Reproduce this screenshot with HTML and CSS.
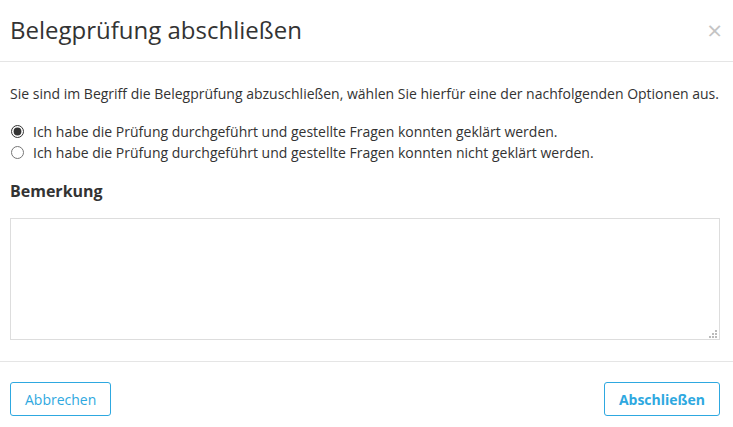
FILE: index.html
```html
<!doctype html>
<html lang="de">
<head>
    <meta charset="UTF-8">
    <title>Belegprüfung abschließen</title>
    <link rel="stylesheet" href="styles.css">
</head>
<body>
    <div class="modal">
        <div class="modal-header">
            <h4 class="modal-title">Belegprüfung abschließen</h4>
            <span class="close">&times;</span>
        </div>
        <div class="modal-body">
            <p class="intro">Sie sind im Begriff die Belegprüfung abzuschließen, wählen Sie hierfür eine der nachfolgenden Optionen aus.</p>
            <label class="radio"><input type="radio" name="result" checked> Ich habe die Prüfung durchgeführt und gestellte Fragen konnten geklärt werden.</label>
            <label class="radio"><input type="radio" name="result"> Ich habe die Prüfung durchgeführt und gestellte Fragen konnten nicht geklärt werden.</label>
            <h5 class="label">Bemerkung</h5>
            <div class="note-wrap">
                <textarea class="note"></textarea>
                <svg class="grip" width="9" height="9" viewBox="0 0 9 9">
                    <rect x="6" y="0" width="2" height="2"/>
                    <rect x="3" y="3" width="2" height="2"/>
                    <rect x="6" y="3" width="2" height="2"/>
                    <rect x="0" y="6" width="2" height="2"/>
                    <rect x="3" y="6" width="2" height="2"/>
                    <rect x="6" y="6" width="2" height="2"/>
                </svg>
            </div>
        </div>
        <div class="modal-footer">
            <button class="btn">Abbrechen</button>
            <button class="btn btn-bold">Abschließen</button>
        </div>
    </div>
</body>
</html>
```
FILE: styles.css
```css
*{
    margin: 0;
    padding: 0;
    box-sizing: border-box;
}
body{
    font-family: "Open Sans", sans-serif;
    font-size: 14px;
    color: #333;
    background: #fff;
}
.modal{
    width: 733px;
}
.modal-header{
    height: 62px;
    padding: 0 11px 2px 10px;
    display: flex;
    align-items: center;
    justify-content: space-between;
    border-bottom: 1px solid #e5e5e5;
}
.modal-title{
    font-size: 24px;
    font-weight: normal;
    color: #333;
}
.close{
    font-size: 26px;
    line-height: 1;
    color: #c4c4c4;
}
.modal-body{
    padding: 21px 13px 21px 10px;
}
.intro{
    line-height: 22px;
    margin-bottom: 16px;
}
.radio{
    display: flex;
    align-items: center;
    line-height: 21px;
}
.radio input{
    width: 13px;
    height: 13px;
    margin: 0 9px 0 1px;
    accent-color: #333;
}
.label{
    font-size: 16px;
    font-weight: bold;
    margin: 17px 0 16px;
    line-height: 22px;
}
.note-wrap{
    position: relative;
}
.note{
    display: block;
    width: 100%;
    height: 122px;
    border: 1px solid #ddd;
    resize: none;
}
.grip{
    position: absolute;
    right: 2px;
    bottom: 1px;
    fill: #bbb;
}
.modal-footer{
    border-top: 1px solid #e5e5e5;
    padding: 20px 13px 20px 10px;
    display: flex;
    justify-content: space-between;
}
.btn{
    font-family: "Open Sans", sans-serif;
    font-size: 14px;
    color: #2ea8e0;
    background: #fff;
    border: 1px solid #2ea8e0;
    border-radius: 3px;
    height: 34px;
    padding: 0 14px;
}
.btn-bold{
    font-weight: bold;
}
```
